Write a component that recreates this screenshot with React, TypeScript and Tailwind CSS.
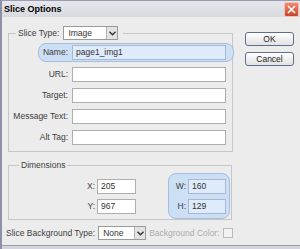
import React from "react";

const Box = ({ w, value, blue }: { w: string; value?: string; blue?: boolean }) => (
  <div
    className={`${w} h-[15px] border flex items-center pl-[3px] text-[#333] ${
      blue ? "bg-[#dfeafa] border-[#a7b9d2]" : "bg-white border-[#aeaeae]"
    }`}
  >
    {value}
  </div>
);

const Chevron = () => (
  <svg width="7" height="5" viewBox="0 0 7 5">
    <path d="M0.5 0.8 L3.5 3.8 L6.5 0.8" fill="none" stroke="#333" strokeWidth="1.4" />
  </svg>
);

const Select = ({ value, w }: { value: string; w: string }) => (
  <div className={`${w} h-[14px] bg-white border border-[#9b9b9b] flex items-center`}>
    <span className="flex-1 pl-[4px] text-[#333]">{value}</span>
    <div className="w-[11px] h-full bg-[#e3e3e3] border-l border-[#b5b5b5] flex items-center justify-center">
      <Chevron />
    </div>
  </div>
);

const Row = ({ label, value }: { label: string; value?: string }) => (
  <div className="flex items-center">
    <span className="w-[59px] text-right">{label}</span>
    <div className="ml-[4px]">
      <Box w="w-[154px]" value={value} />
    </div>
  </div>
);

const Button = ({ label }: { label: string }) => (
  <button className="w-[49px] h-[14px] rounded-[3px] border border-[#5d6f8f] bg-gradient-to-b from-white to-[#e2e2e2] flex items-center justify-center text-[#222] leading-none">
    {label}
  </button>
);

export default function App() {
  return (
    <div className="w-[300px] h-[249px] overflow-hidden flex flex-col bg-[#ececec] border-l-2 border-[#8e90a8] font-['Liberation_Sans',Arial,sans-serif] text-[8.5px] leading-[11px] text-[#3d3d3d]">
      {/* Title bar */}
      <div className="h-[17px] flex items-center justify-between bg-gradient-to-b from-[#e6e7ec] to-[#d9dae0] border-t border-[#9a9cae]">
        <span className="pl-[2px] font-bold text-[9px] text-black">Slice Options</span>
        <div className="mr-[1px] w-[15px] h-[15px] rounded-[2px] border border-[#f0c2b4] bg-gradient-to-b from-[#ec8a70] to-[#c9432a] flex items-center justify-center">
          <svg width="9" height="9" viewBox="0 0 9 9">
            <path d="M1 1 L8 8 M8 1 L1 8" stroke="white" strokeWidth="1.6" />
          </svg>
        </div>
      </div>

      <div className="flex-1 flex">
        {/* Left column */}
        <div className="pl-[6px] w-[231px] flex flex-col">
          <fieldset className="mt-[9px] border border-[#c6c6c6] pb-[6px]">
            <legend className="ml-[7px] px-[2px] pr-[5px] flex items-center">
              <span>Slice Type:</span>
              <div className="ml-[4px]">
                <Select value="Image" w="w-[55px]" />
              </div>
            </legend>
            <div className="flex flex-col">
              <div className="mt-[3px] ml-[29px] -mr-[2px] h-[19px] rounded-[8px] bg-[#cddff5] border border-[#a2bee0] flex items-center">
                <span className="w-[29px] text-right">Name:</span>
                <div className="ml-[4px]">
                  <Box w="w-[154px]" value="page1_img1" blue />
                </div>
              </div>
              <div className="mt-[5px] flex flex-col gap-[6px]">
                <Row label="URL:" />
                <Row label="Target:" />
                <Row label="Message Text:" />
                <Row label="Alt Tag:" />
              </div>
            </div>
          </fieldset>

          <fieldset className="mt-[8px] border border-[#c6c6c6] w-[224px]">
            <legend className="ml-[10px] px-[2px]">Dimensions</legend>
            <div className="flex items-start">
              <div className="mt-[8px] flex flex-col gap-[5px]">
                <div className="flex items-center">
                  <span className="w-[86px] text-right">X:</span>
                  <div className="ml-[2px]">
                    <Box w="w-[39px]" value="205" />
                  </div>
                </div>
                <div className="flex items-center">
                  <span className="w-[86px] text-right">Y:</span>
                  <div className="ml-[2px]">
                    <Box w="w-[39px]" value="967" />
                  </div>
                </div>
              </div>
              <div className="ml-[32px] mt-[2px] w-[62px] h-[46px] rounded-[8px] bg-[#cddff5] border border-[#a2bee0] pt-[5px] pl-[3px] flex flex-col gap-[5px]">
                <div className="flex items-center">
                  <span className="w-[14px] text-right">W:</span>
                  <div className="ml-[2px]">
                    <Box w="w-[38px]" value="160" blue />
                  </div>
                </div>
                <div className="flex items-center">
                  <span className="w-[14px] text-right">H:</span>
                  <div className="ml-[2px]">
                    <Box w="w-[38px]" value="129" blue />
                  </div>
                </div>
              </div>
            </div>
          </fieldset>

          <div className="mt-[6px] -ml-[2px] flex items-center">
            <span>Slice Background Type:</span>
            <div className="ml-[3px]">
              <Select value="None" w="w-[48px]" />
            </div>
            <span className="ml-[3px] text-[#adadad]">Background Color:</span>
            <div className="ml-[3px] w-[10px] h-[10px] border border-[#b9b9b9] bg-[#f2f2f2]" />
          </div>
        </div>

        {/* Right column */}
        <div className="ml-[12px] mt-[15px] flex flex-col gap-[6px]">
          <Button label="OK" />
          <Button label="Cancel" />
        </div>
      </div>

      <div className="h-[4px] bg-[#d3d4dc] border-t border-[#9fa0ac]" />
    </div>
  );
}
